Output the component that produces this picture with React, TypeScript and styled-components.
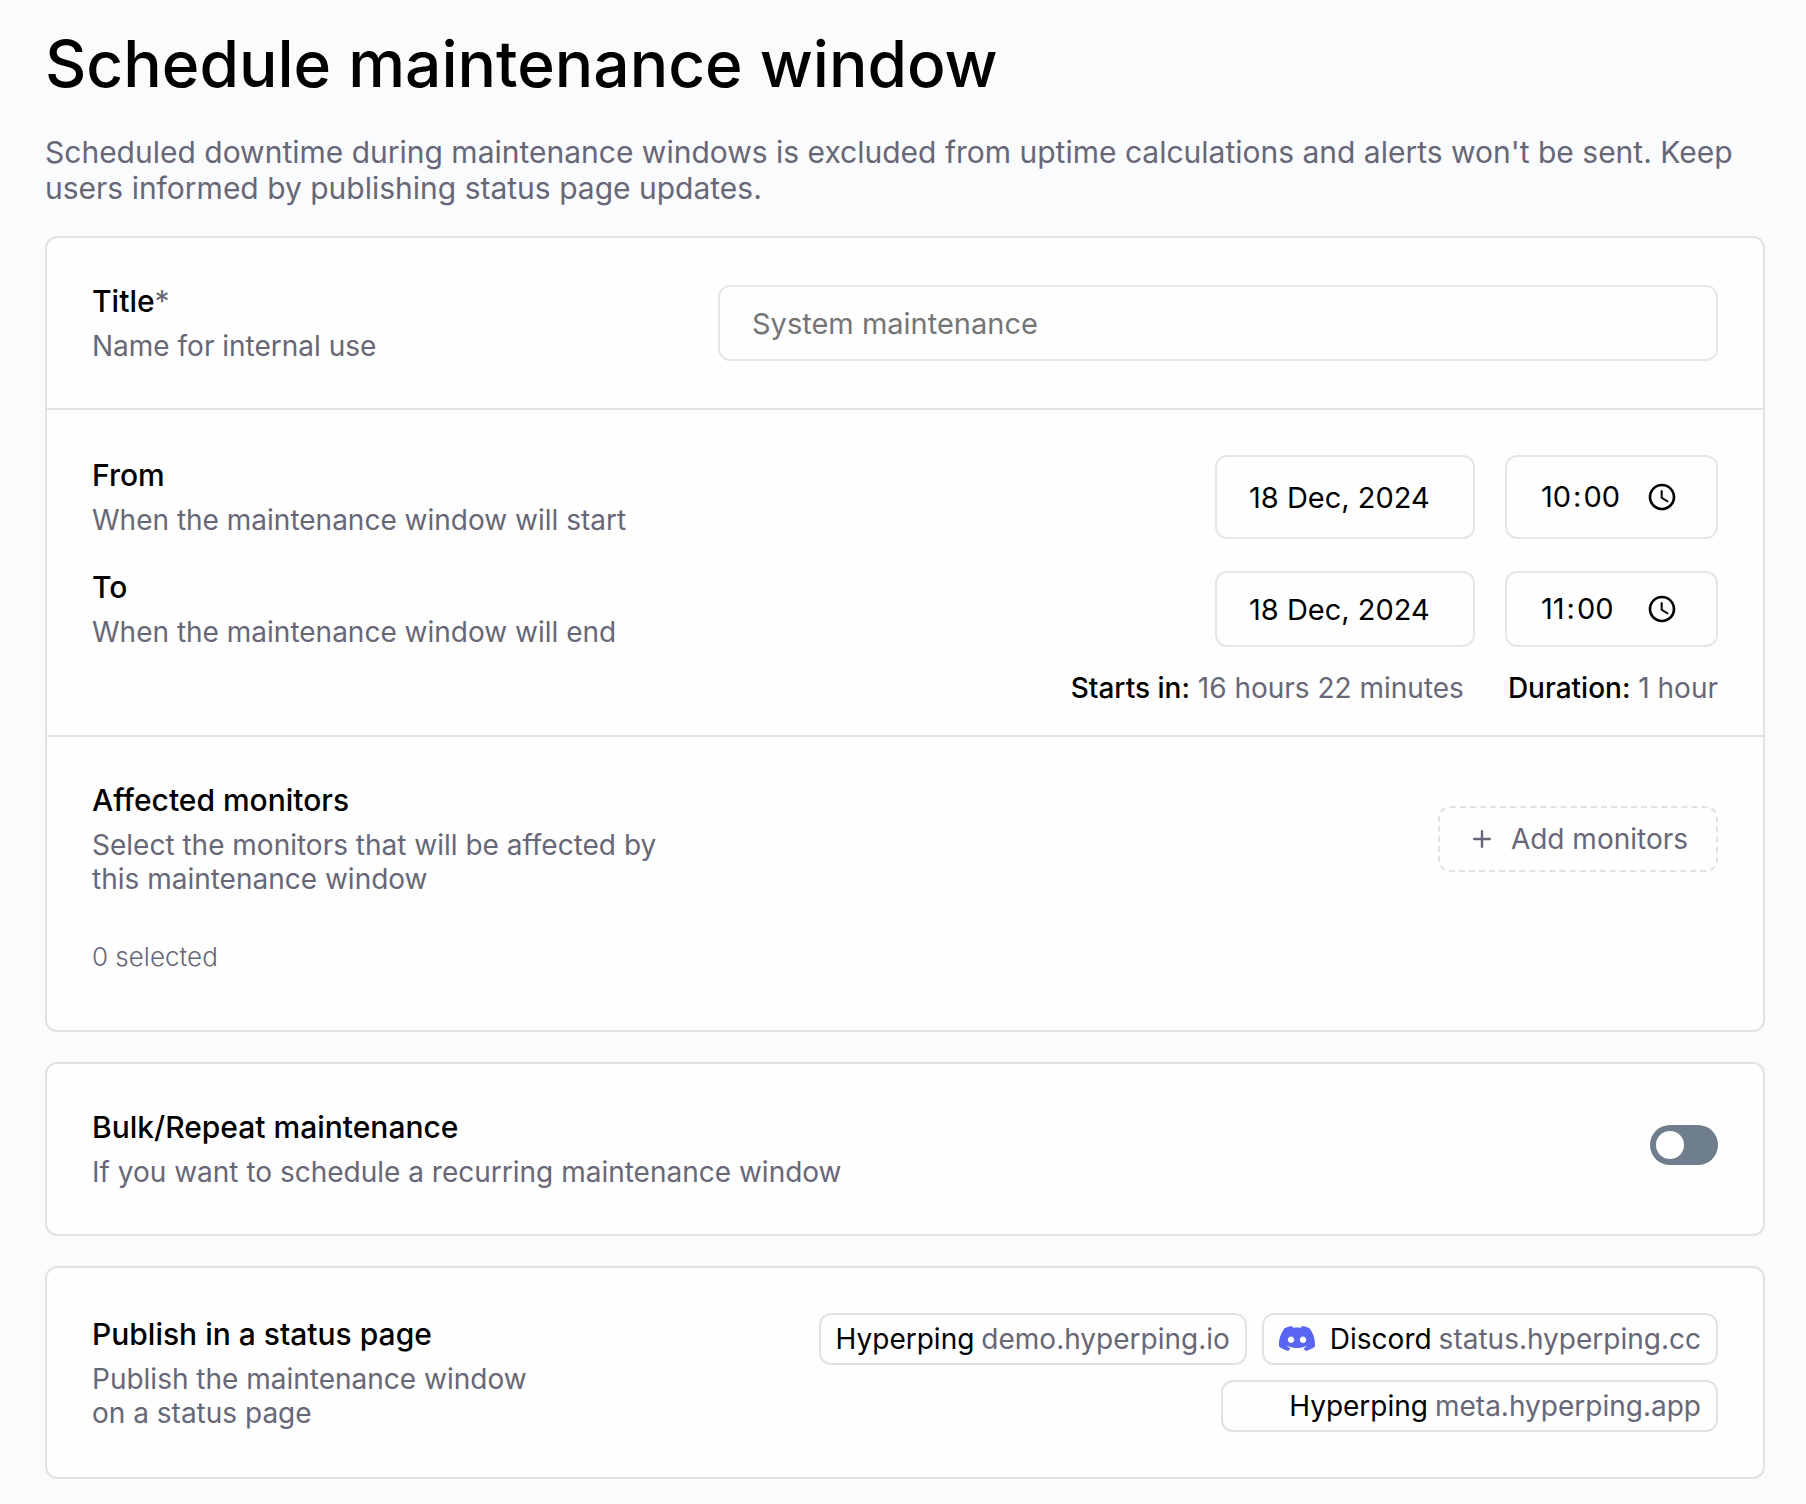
import React, { useState } from 'react';
import styled, { createGlobalStyle } from 'styled-components';

const color = {
  page: '#fafbfd',
  card: '#fefefe',
  line: '#e2e2e4',
  fieldLine: '#e6e6e7',
  text: '#000000',
  muted: '#676777',
  placeholder: '#757575',
  toggle: '#6f7e8c',
  discord: '#5865f2',
};

const GlobalStyle = createGlobalStyle`
  *, *::before, *::after { box-sizing: border-box; }
  body {
    margin: 0;
    background: ${color.page};
    color: ${color.text};
    font-family: Inter, "Liberation Sans", sans-serif;
    font-size: 28px;
    line-height: 34px;
    font-variant-ligatures: no-common-ligatures;
  }
  button, input { font: inherit; color: inherit; }
`;

const Page = styled.main`
  padding: 26px 41px 25px 45px;
`;

const Heading = styled.h1`
  margin: 0 0 32px;
  font-size: 64px;
  line-height: 76px;
  font-weight: 500;
`;

const Intro = styled.p`
  margin: 0 0 30px;
  font-size: 30px;
  line-height: 36px;
  color: ${color.muted};
`;

const Form = styled.form`
  display: flex;
  flex-direction: column;
  gap: 30px;
`;

const Card = styled.div`
  background: ${color.card};
  border: 2px solid ${color.line};
  border-radius: 12px;
`;

const Section = styled.section<{ $bottom?: number }>`
  padding: 45px 45px ${(p) => p.$bottom ?? 45}px;
  & + & {
    border-top: 2px solid ${color.line};
  }
`;

const Row = styled.div`
  display: flex;
  align-items: center;
  justify-content: space-between;
  gap: 30px;
  & + & {
    margin-top: 30px;
  }
`;

const Caption = styled.div<{ $width?: number }>`
  flex: 0 0 auto;
  max-width: ${(p) => p.$width ?? 900}px;
`;

const Name = styled.label`
  display: block;
  font-size: 30px;
  line-height: 36px;
  font-weight: 500;
`;

const GroupName = styled(Name).attrs({ as: 'h2' })`
  margin: 0;
`;

const Required = styled.span`
  font-weight: 400;
  color: ${color.muted};
`;

const Hint = styled.p`
  margin: 10px 0 0;
  color: ${color.muted};
`;

const TextField = styled.input`
  min-width: 0;
  height: 76px;
  padding: 0 32px;
  font-size: 29px;
  line-height: 36px;
  background: ${color.card};
  border: 2px solid ${color.fieldLine};
  border-radius: 12px;
  &::placeholder {
    color: ${color.placeholder};
    opacity: 1;
  }
`;

const TitleInput = styled(TextField)`
  flex: 0 1 1000px;
`;

const Fields = styled.div`
  display: flex;
  gap: 30px;
`;

const DateInput = styled(TextField)<{ $tall?: boolean }>`
  width: 260px;
  height: ${(p) => (p.$tall ? 84 : 76)}px;
`;

const TimeInput = styled(DateInput)`
  width: 213px;
  &::-webkit-datetime-edit {
    padding: 0;
  }
  &::-webkit-datetime-edit-hour-field,
  &::-webkit-datetime-edit-minute-field {
    padding: 0 2px;
  }
  &::-webkit-datetime-edit-ampm-field {
    display: none;
  }
  &::-webkit-calendar-picker-indicator {
    width: 32px;
    height: 32px;
    margin: 0 6px 0 0;
    padding: 0;
    background-size: 32px 32px;
  }
`;

const Summary = styled.div`
  display: flex;
  justify-content: flex-end;
  gap: 44px;
  margin-top: 22px;
  color: ${color.muted};
`;

const SummaryName = styled.span`
  font-weight: 500;
  color: ${color.text};
`;

const Selected = styled.p`
  margin: 45px 0 0;
  font-size: 26px;
  line-height: 32px;
  font-weight: 300;
  color: ${color.muted};
`;

const AddButton = styled.button`
  display: flex;
  align-items: center;
  gap: 20px;
  height: 66px;
  padding: 0 28px 0 33px;
  color: ${color.muted};
  background: none;
  border: 2px dashed ${color.line};
  border-radius: 12px;
`;

const Switch = styled.input`
  appearance: none;
  flex: none;
  width: 68px;
  height: 40px;
  margin: 0 0 8px;
  padding: 6px;
  background: ${color.toggle};
  border-radius: 20px;
  &::before {
    content: '';
    display: block;
    width: 28px;
    height: 28px;
    background: #ffffff;
    border-radius: 50%;
  }
  &:checked::before {
    margin-left: auto;
  }
`;

const Badges = styled.div`
  flex: 1;
  display: flex;
  flex-wrap: wrap;
  justify-content: flex-end;
  gap: 15px;
`;

const Badge = styled.button`
  display: flex;
  align-items: center;
  gap: 7px;
  height: 52px;
  padding: 0 15px;
  color: ${color.muted};
  background: none;
  border: 2px solid ${color.line};
  border-radius: 12px;
`;

const BadgeName = styled.span`
  color: ${color.text};
`;

const Logo = styled.span`
  display: flex;
  width: 36px;
  margin: 0 8px 2px 0;
`;

const PlusIcon = () => (
  <svg width="18" height="18" viewBox="0 0 18 18" fill="none" stroke={color.muted} strokeWidth="2.4" strokeLinecap="round">
    <path d="M9 1.2v15.6M1.2 9h15.6" />
  </svg>
);

const DiscordIcon = () => (
  <svg width="36" height="25" viewBox="0 2.8 24 18.4" preserveAspectRatio="none" fill={color.discord}>
    <path d="M20.317 4.3698a19.7913 19.7913 0 00-4.8851-1.5152.0741.0741 0 00-.0785.0371c-.211.3753-.4447.8648-.6083 1.2495-1.8447-.2762-3.68-.2762-5.4868 0-.1636-.3933-.4058-.8742-.6177-1.2495a.077.077 0 00-.0785-.037 19.7363 19.7363 0 00-4.8852 1.515.0699.0699 0 00-.0321.0277C.5334 9.0458-.319 13.5799.0992 18.0578a.0824.0824 0 00.0312.0561c2.0528 1.5076 4.0413 2.4228 5.9929 3.0294a.0777.0777 0 00.0842-.0276c.4616-.6304.8731-1.2952 1.226-1.9942a.076.076 0 00-.0416-.1057c-.6528-.2476-1.2743-.5495-1.8722-.8923a.077.077 0 01-.0076-.1277c.1258-.0943.2517-.1923.3718-.2914a.0743.0743 0 01.0776-.0105c3.9278 1.7933 8.18 1.7933 12.0614 0a.0739.0739 0 01.0785.0095c.1202.099.246.1981.3728.2924a.077.077 0 01-.0066.1276 12.2986 12.2986 0 01-1.873.8914.0766.0766 0 00-.0407.1067c.3604.698.7719 1.3628 1.225 1.9932a.076.076 0 00.0842.0286c1.961-.6067 3.9495-1.5219 6.0023-3.0294a.077.077 0 00.0313-.0552c.5004-5.177-.8382-9.6739-3.5485-13.6604a.061.061 0 00-.0312-.0286zM8.02 15.3312c-1.1825 0-2.1569-1.0857-2.1569-2.419 0-1.3332.9555-2.4189 2.157-2.4189 1.2108 0 2.1757 1.0952 2.1568 2.419 0 1.3332-.9555 2.4189-2.1569 2.4189zm7.9748 0c-1.1825 0-2.1569-1.0857-2.1569-2.419 0-1.3332.9554-2.4189 2.1569-2.4189 1.2108 0 2.1757 1.0952 2.1568 2.419 0 1.3332-.946 2.4189-2.1568 2.4189z" />
  </svg>
);

type MomentProps = {
  id: string;
  name: string;
  hint: string;
  date: string;
  time: string;
  tall?: boolean;
};

const MomentRow = ({ id, name, hint, date, time, tall }: MomentProps) => (
  <Row>
    <Caption>
      <Name htmlFor={`${id}-date`}>{name}</Name>
      <Hint>{hint}</Hint>
    </Caption>
    <Fields>
      <DateInput id={`${id}-date`} type="text" defaultValue={date} $tall={tall} />
      <TimeInput type="time" aria-label={`${name} time`} defaultValue={time} $tall={tall} />
    </Fields>
  </Row>
);

const statusPages = [
  { name: 'Hyperping', host: 'demo.hyperping.io', logo: null },
  { name: 'Discord', host: 'status.hyperping.cc', logo: <Logo><DiscordIcon /></Logo> },
  { name: 'Hyperping', host: 'meta.hyperping.app', logo: <Logo /> },
];

export default function App() {
  const [repeat, setRepeat] = useState(false);

  return (
    <>
      <GlobalStyle />
      <Page>
        <Heading>Schedule maintenance window</Heading>
        <Intro>
          Scheduled downtime during maintenance windows is excluded from uptime calculations and
          alerts won't be sent. Keep users informed by publishing status page updates.
        </Intro>
        <Form onSubmit={(e) => e.preventDefault()}>
          <Card>
            <Section>
              <Row>
                <Caption>
                  <Name htmlFor="title">
                    Title<Required>*</Required>
                  </Name>
                  <Hint>Name for internal use</Hint>
                </Caption>
                <TitleInput id="title" type="text" placeholder="System maintenance" />
              </Row>
            </Section>
            <Section $bottom={30}>
              <MomentRow
                id="from"
                name="From"
                hint="When the maintenance window will start"
                date="18 Dec, 2024"
                time="10:00"
                tall
              />
              <MomentRow
                id="to"
                name="To"
                hint="When the maintenance window will end"
                date="18 Dec, 2024"
                time="11:00"
              />
              <Summary>
                <span>
                  <SummaryName>Starts in:</SummaryName> 16 hours 22 minutes
                </span>
                <span>
                  <SummaryName>Duration:</SummaryName> 1 hour
                </span>
              </Summary>
            </Section>
            <Section $bottom={57}>
              <Row>
                <Caption $width={600}>
                  <GroupName>Affected monitors</GroupName>
                  <Hint>Select the monitors that will be affected by this maintenance window</Hint>
                </Caption>
                <AddButton type="button">
                  <PlusIcon />
                  Add monitors
                </AddButton>
              </Row>
              <Selected>0 selected</Selected>
            </Section>
          </Card>
          <Card>
            <Section>
              <Row>
                <Caption>
                  <Name htmlFor="repeat">Bulk/Repeat maintenance</Name>
                  <Hint>If you want to schedule a recurring maintenance window</Hint>
                </Caption>
                <Switch
                  id="repeat"
                  type="checkbox"
                  role="switch"
                  checked={repeat}
                  onChange={(e) => setRepeat(e.target.checked)}
                />
              </Row>
            </Section>
          </Card>
          <Card>
            <Section>
              <Row>
                <Caption $width={460}>
                  <GroupName>Publish in a status page</GroupName>
                  <Hint>Publish the maintenance window on a status page</Hint>
                </Caption>
                <Badges>
                  {statusPages.map((page) => (
                    <Badge key={page.host} type="button">
                      {page.logo}
                      <BadgeName>{page.name}</BadgeName>
                      {page.host}
                    </Badge>
                  ))}
                </Badges>
              </Row>
            </Section>
          </Card>
        </Form>
      </Page>
    </>
  );
}
